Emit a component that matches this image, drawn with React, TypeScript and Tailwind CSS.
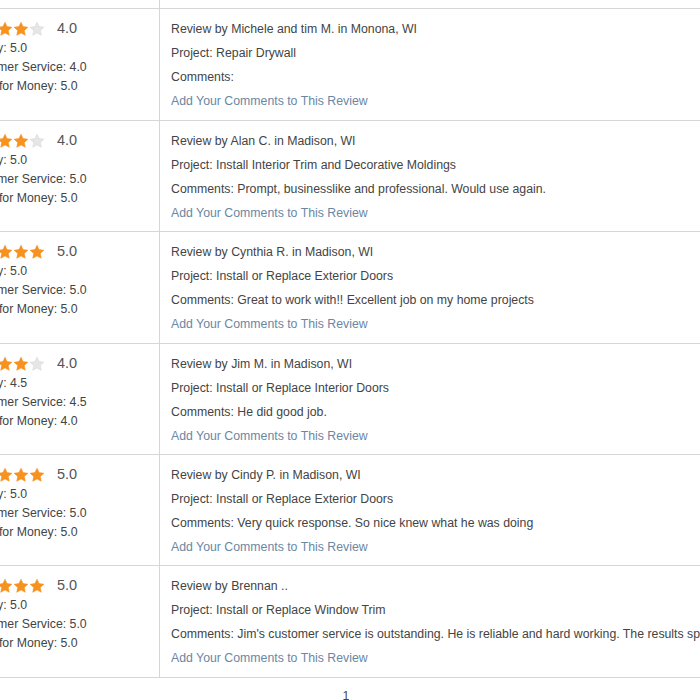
import React from 'react';

interface Review {
    rating: string;
    stars: number;
    quality: string;
    service: string;
    value: string;
    reviewer: string;
    project: string;
    comments: string;
    height: string;
}

const reviews: Review[] = [
    { rating: "4.0", stars: 4, quality: "5.0", service: "4.0", value: "5.0", reviewer: "Michele and tim M. in Monona, WI", project: "Repair Drywall", comments: "", height: "h-[112px]" },
    { rating: "4.0", stars: 4, quality: "5.0", service: "5.0", value: "5.0", reviewer: "Alan C. in Madison, WI", project: "Install Interior Trim and Decorative Moldings", comments: "Prompt, businesslike and professional. Would use again.", height: "h-[111px]" },
    { rating: "5.0", stars: 5, quality: "5.0", service: "5.0", value: "5.0", reviewer: "Cynthia R. in Madison, WI", project: "Install or Replace Exterior Doors", comments: "Great to work with!! Excellent job on my home projects", height: "h-[112px]" },
    { rating: "4.0", stars: 4, quality: "4.5", service: "4.5", value: "4.0", reviewer: "Jim M. in Madison, WI", project: "Install or Replace Interior Doors", comments: "He did good job.", height: "h-[111px]" },
    { rating: "5.0", stars: 5, quality: "5.0", service: "5.0", value: "5.0", reviewer: "Cindy P. in Madison, WI", project: "Install or Replace Exterior Doors", comments: "Very quick response. So nice knew what he was doing", height: "h-[111px]" },
    { rating: "5.0", stars: 5, quality: "5.0", service: "5.0", value: "5.0", reviewer: "Brennan ..", project: "Install or Replace Window Trim", comments: "Jim's customer service is outstanding. He is reliable and hard working. The results speak for themselves.", height: "h-[112px]" },
];

const Star = ({ filled }: { filled: boolean }) => (
    <svg width="16" height="16" viewBox="0 0 24 24">
        <path
            d="M12 1.8l3.1 6.6 7.2.9-5.3 5 1.4 7.1L12 17.9l-6.4 3.5 1.4-7.1-5.3-5 7.2-.9z"
            fill={filled ? "#f7921e" : "#e6e6e6"}
            stroke={filled ? "#f39020" : "#d6d6d6"}
            strokeWidth="0.8"
            strokeLinejoin="round"
        />
    </svg>
);

const ReviewRow = ({ r }: { r: Review }) => (
    <div className={`flex ${r.height} border-b border-[#d6d6d6]`}>
        <div className="w-[206px] shrink-0 border-r border-[#d6d6d6] pl-[11px] text-[12.3px] text-[#444]">
            <div className="flex items-center mt-[12px] h-4">
                {[1, 2, 3, 4, 5].map((i) => (
                    <Star key={i} filled={i <= r.stars} />
                ))}
                <span className="ml-[12px] text-[14.5px] text-[#555]">{r.rating}</span>
            </div>
            <div className="mt-[2px] leading-[19px]">
                <p>Quality: {r.quality}</p>
                <p>Customer Service: {r.service}</p>
                <p>Value for Money: {r.value}</p>
            </div>
        </div>
        <div className="flex-1 pl-[11px] pt-[8px] text-[12.3px] leading-[24px] text-[#444] whitespace-nowrap">
            <p>Review by {r.reviewer}</p>
            <p>Project: {r.project}</p>
            <p>Comments: {r.comments}</p>
            <a href="#!" className="text-[#6b87a3]">Add Your Comments to This Review</a>
        </div>
    </div>
);

export default function App() {
    return (
        <div className="w-[700px] h-[700px] overflow-hidden bg-white font-['Liberation_Sans',Arial,sans-serif]">
            <div className="ml-[-46px] w-[784px]">
                <div className="flex h-[9px] border-b border-[#d6d6d6]">
                    <div className="w-[206px] border-r border-[#d6d6d6]"></div>
                </div>
                {reviews.map((r, i) => (
                    <ReviewRow key={i} r={r} />
                ))}
                <div className="pt-[10px] text-center text-[12.3px] leading-4 text-[#444]">1</div>
            </div>
        </div>
    );
}
